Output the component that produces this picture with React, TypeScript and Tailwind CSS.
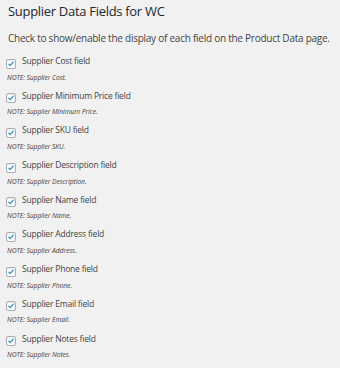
const fields = [
  ["Supplier Cost field", "NOTE: Supplier Cost."],
  ["Supplier Minimum Price field", "NOTE: Supplier Minimum Price."],
  ["Supplier SKU field", "NOTE: Supplier SKU."],
  ["Supplier Description field", "NOTE: Supplier Description."],
  ["Supplier Name field", "NOTE: Supplier Name."],
  ["Supplier Address field", "NOTE: Supplier Address."],
  ["Supplier Phone field", "NOTE: Supplier Phone."],
  ["Supplier Email field", "NOTE: Supplier Email."],
  ["Supplier Notes field", "NOTE: Supplier Notes."],
];

function CheckBox() {
  return (
    <span className="mt-[3.5px] flex h-[10px] w-[10px] shrink-0 items-center justify-center rounded-[2px] border border-[#a9aeb3] bg-white shadow-[inset_0_1px_2px_rgba(0,0,0,0.1)]">
      <svg viewBox="0 0 20 20" className="h-[10px] w-[10px]">
        <path d="M4.5 10.5l3.5 3.5 7.5-8.5" fill="none" stroke="#1e8cbe" strokeWidth="3" strokeLinecap="round" strokeLinejoin="round" />
      </svg>
    </span>
  );
}

export default function App() {
  return (
    <div className="min-h-[368px] w-[340px] bg-[#f1f1f1] px-2 pt-[1px] text-[#444] [font-family:'Open_Sans',sans-serif]">
      <h1 className="text-[13px] leading-[20px] tracking-[-0.3px] text-[#23282d]">Supplier Data Fields for WC</h1>
      <p className="mt-[9.5px] whitespace-nowrap text-[10px] leading-[14px] tracking-[-0.25px]">
        Check to show/enable the display of each field on the Product Data page.
      </p>

      <div className="mt-[10.5px] flex flex-col">
        {fields.map(([label, note]) => (
          <div key={label} className="h-[34.7px] shrink-0">
            <label className="-ml-[2px] flex items-start gap-[6px]">
              <CheckBox />
              <span className="text-[8.5px] leading-[12px] tracking-[-0.2px]">{label}</span>
            </label>
            <p className="mt-[4px] -ml-[1px] text-[6.8px] italic leading-[9px] tracking-[-0.1px]">{note}</p>
          </div>
        ))}
      </div>
    </div>
  );
}
